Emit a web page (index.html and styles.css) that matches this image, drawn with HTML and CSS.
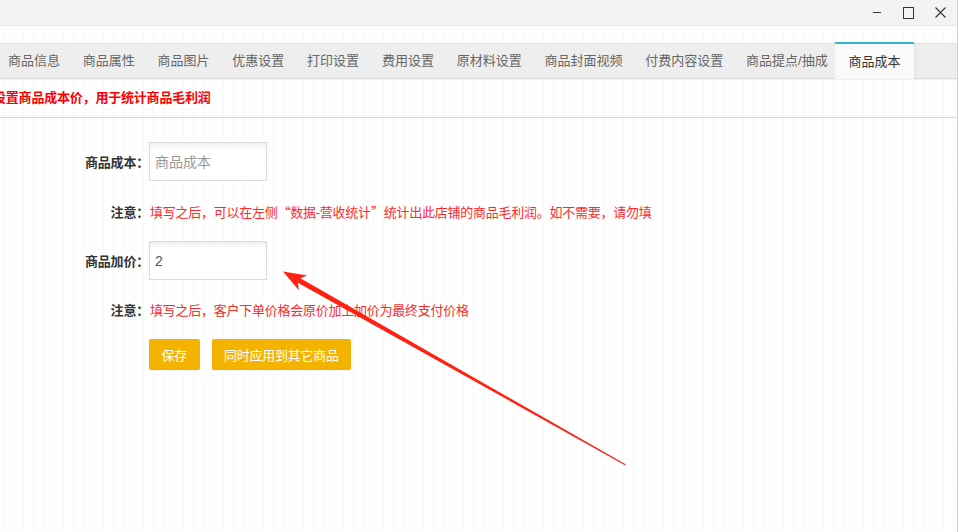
FILE: index.html
```html
<!DOCTYPE html>
<html lang="zh-CN">
<head>
    <meta charset="UTF-8">
    <meta name="viewport" content="width=device-width, initial-scale=1.0">
    <title>商品成本</title>
    <link rel="stylesheet" href="styles.css">
</head>
<body>
    <div class="window">
        <!-- window title bar -->
        <div class="titlebar">
            <span class="win-btn win-min"></span>
            <span class="win-btn win-max"></span>
            <span class="win-btn win-close">
                <svg width="11" height="11" viewBox="0 0 11 11"><path d="M0.5 0.5 L10.5 10.5 M10.5 0.5 L0.5 10.5" stroke="#333" stroke-width="1.1" fill="none"/></svg>
            </span>
        </div>

        <div class="page">
            <ul class="tabs">
                <li class="tab">商品信息</li>
                <li class="tab">商品属性</li>
                <li class="tab">商品图片</li>
                <li class="tab">优惠设置</li>
                <li class="tab">打印设置</li>
                <li class="tab">费用设置</li>
                <li class="tab">原材料设置</li>
                <li class="tab">商品封面视频</li>
                <li class="tab">付费内容设置</li>
                <li class="tab">商品提点/抽成</li>
                <li class="tab active">商品成本</li>
            </ul>

            <div class="tip">设置商品成本价，用于统计商品毛利润</div>

            <form class="cost-form">
                <label class="form-label" for="cost">商品成本：</label>
                <input class="form-input" id="cost" type="text" placeholder="商品成本">

                <span class="form-label">注意：</span>
                <span class="note">填写之后，可以在左侧<span class="quote">“</span>数据-营收统计<span class="quote">”</span>统计出此店铺的商品毛利润。如不需要，请勿填</span>

                <label class="form-label" for="markup">商品加价：</label>
                <input class="form-input" id="markup" type="text" value="2">

                <span class="form-label">注意：</span>
                <span class="note">填写之后，客户下单价格会原价加上加价为最终支付价格</span>

                <span></span>
                <div class="actions">
                    <button type="button" class="btn">保存</button>
                    <button type="button" class="btn">同时应用到其它商品</button>
                </div>
            </form>

            <!-- annotation arrow drawn over the form -->
            <svg class="arrow" width="959" height="532" viewBox="0 0 959 532">
                <g transform="translate(283 271.5) rotate(29.43)">
                    <polygon points="0,0 23,-8.5 18.5,-2.6 393,-0.5 393,0.6 18.5,2.6 23,8.5" fill="#ff2213"/>
                </g>
            </svg>
        </div>
    </div>
</body>
</html>
```

FILE: styles.css
```css
* {
    box-sizing: border-box;
}

body {
    margin: 0;
    font-family: "Liberation Sans", "Noto Sans CJK SC", sans-serif;
    font-size: 13px;
    color: #333;
    background: #fff;
    overflow: hidden;
}

.window {
    width: 958px;
    height: 532px;
    border-right: 1px solid #d4d4d4;
    position: relative;
    overflow: hidden;
}

/* title bar */
.titlebar {
    height: 26px;
    background: #f3f3f3;
    border-bottom: 1px solid #e8e8e8;
    display: flex;
    justify-content: flex-end;
    align-items: center;
    padding-right: 11px;
}

.win-btn {
    width: 11px;
    height: 11px;
    margin-left: 21px;
    display: flex;
    align-items: center;
    justify-content: center;
}

.win-min::before {
    content: "";
    width: 8px;
    height: 1px;
    background: #333;
}

.win-max::before {
    content: "";
    width: 9px;
    height: 10px;
    border: 1px solid #333;
}

/* page with dotted grid */
.page {
    height: 506px;
    padding-top: 17px;
    background-color: #fff;
    background-image:
        radial-gradient(circle, rgba(0, 0, 0, 0.06) 0.6px, transparent 0.8px),
        linear-gradient(90deg, rgba(0, 0, 0, 0.017) 1px, transparent 1px),
        linear-gradient(rgba(0, 0, 0, 0.017) 1px, transparent 1px);
    background-size: 10px 10px;
    background-position: -2px -5px, 3px 0, 0 3px;
}

/* tabs */
.tabs {
    list-style: none;
    margin: 0 0 0 -3.5px;
    padding: 0;
    display: flex;
    height: 36px;
    background: #eeeeee;
    border-top: 1px solid #e0e0e0;
    border-bottom: 1px solid #dadada;
    box-shadow: 0 1px 2px rgba(0, 0, 0, 0.04);
}

.tab {
    padding: 0 11.4px;
    line-height: 34px;
    color: #666;
    white-space: nowrap;
}

.tab.active {
    margin: -2px 0 -1px -4.5px;
    padding: 0 13px 0 14px;
    line-height: 36px;
    color: #333;
    background: #fafafa;
    border-top: 2px solid #35b4d8;
    box-shadow: 1px 0 2px rgba(0, 0, 0, 0.06);
}

.tip {
    height: 39px;
    line-height: 37px;
    margin-left: -7px;
    color: #ff0000;
    font-weight: bold;
    letter-spacing: -0.2px;
    border-bottom: 1px solid #d9d9d9;
}

/* form */
.cost-form {
    display: grid;
    grid-template-columns: 149px auto;
    grid-template-rows: 39px 60px 39px 59px 31px;
    align-items: center;
    padding-top: 24px;
}

.form-label {
    text-align: right;
    font-weight: bold;
    color: #333;
    letter-spacing: -0.2px;
}

.form-input {
    width: 118px;
    height: 39px;
    border: 1px solid #dcdcdc;
    padding: 0 5px;
    font-family: inherit;
    font-size: 14px;
    color: #555;
    background: #fff;
    box-shadow: inset 0 7px 6px -5px rgba(0, 0, 0, 0.09);
    outline: none;
}

.form-input::placeholder {
    color: #999;
}

.note {
    color: #ff2a2a;
    padding-left: 1px;
    letter-spacing: -0.25px;
}

.quote {
    font-family: "Noto Sans CJK SC", sans-serif;
}

.actions {
    display: flex;
    gap: 12px;
    height: 31px;
}

.btn {
    height: 31px;
    padding: 0 12.5px;
    border: none;
    border-radius: 2px;
    background: #f4b300;
    color: #fff;
    font-family: inherit;
    font-size: 13px;
    letter-spacing: -0.25px;
    box-shadow: 0 1px 1px rgba(0, 0, 0, 0.06);
}

.arrow {
    position: absolute;
    top: 0;
    left: 0;
    pointer-events: none;
}
```
